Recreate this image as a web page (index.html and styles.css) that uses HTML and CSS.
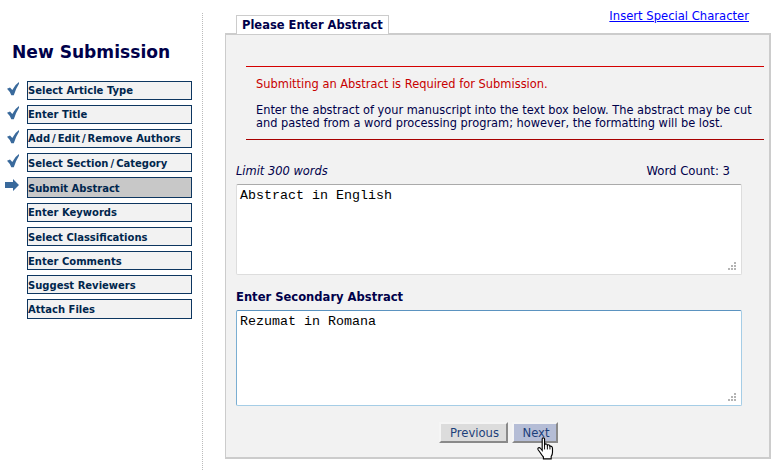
FILE: index.html
```html
<!DOCTYPE html>
<html lang="en">
<head>
    <meta charset="UTF-8">
    <title>New Submission</title>
    <link rel="stylesheet" href="styles.css">
</head>
<body>
    <div class="page">
        <div class="sidebar">
            <h1 class="title">New Submission</h1>
            <ul class="steps">
                <li class="step">
                    <svg class="mark" viewBox="0 0 16 16"><path d="M4 7.8 L7 6.5 L9.3 9 Q12 3.5 16 1 L16.5 2 Q13 7 10.8 14.3 H8.3 Q7 10.5 4 7.8 Z" fill="#3a6a9c"/></svg>
                    <a class="step-link">Select Article Type</a>
                </li>
                <li class="step">
                    <svg class="mark" viewBox="0 0 16 16"><path d="M4 7.8 L7 6.5 L9.3 9 Q12 3.5 16 1 L16.5 2 Q13 7 10.8 14.3 H8.3 Q7 10.5 4 7.8 Z" fill="#3a6a9c"/></svg>
                    <a class="step-link">Enter Title</a>
                </li>
                <li class="step">
                    <svg class="mark" viewBox="0 0 16 16"><path d="M4 7.8 L7 6.5 L9.3 9 Q12 3.5 16 1 L16.5 2 Q13 7 10.8 14.3 H8.3 Q7 10.5 4 7.8 Z" fill="#3a6a9c"/></svg>
                    <a class="step-link">Add<span class="slash">/</span>Edit<span class="slash">/</span>Remove Authors</a>
                </li>
                <li class="step">
                    <svg class="mark" viewBox="0 0 16 16"><path d="M4 7.8 L7 6.5 L9.3 9 Q12 3.5 16 1 L16.5 2 Q13 7 10.8 14.3 H8.3 Q7 10.5 4 7.8 Z" fill="#3a6a9c"/></svg>
                    <a class="step-link step-link-low">Select Section<span class="slash">/</span>Category</a>
                </li>
                <li class="step step-current">
                    <svg class="mark" viewBox="0 0 16 16"><path d="M2 5 H10 V2 L16 8 L10 14 V11 H2 Z" fill="#3a6a9c"/></svg>
                    <a class="step-link step-link-low">Submit Abstract</a>
                </li>
                <li class="step"><span class="mark"></span><a class="step-link">Enter Keywords</a></li>
                <li class="step"><span class="mark"></span><a class="step-link step-link-low">Select Classifications</a></li>
                <li class="step"><span class="mark"></span><a class="step-link step-link-low">Enter Comments</a></li>
                <li class="step"><span class="mark"></span><a class="step-link step-link-low">Suggest Reviewers</a></li>
                <li class="step"><span class="mark"></span><a class="step-link step-link-low">Attach Files</a></li>
            </ul>
        </div>
        <div class="main">
            <div class="tab-row">
                <div class="tab">Please Enter Abstract</div>
                <a class="special-link" href="#">Insert Special Character</a>
            </div>
            <div class="panel">
                <div class="notice">
                    <p class="required">Submitting an Abstract is Required for Submission.</p>
                    <p class="help">Enter the abstract of your manuscript into the text box below. The abstract may be cut and pasted from a word processing program; however, the formatting will be lost.</p>
                </div>
                <div class="limit-row">
                    <em>Limit 300 words</em>
                    <span class="word-count">Word Count: 3</span>
                </div>
                <div class="abstract-wrap abstract-wrap-first">
                    <textarea class="abstract abstract-first">Abstract in English</textarea>
                    <svg class="grip" viewBox="0 0 8 8"><path d="M6 0 h2 v2 h-2 Z M3 3 h2 v2 h-2 Z M6 3 h2 v2 h-2 Z M0 6 h2 v2 h-2 Z M3 6 h2 v2 h-2 Z M6 6 h2 v2 h-2 Z" fill="#b4b4b4"/></svg>
                </div>
                <label class="secondary-label">Enter Secondary Abstract</label>
                <div class="abstract-wrap">
                    <textarea class="abstract abstract-second">Rezumat in Romana</textarea>
                    <svg class="grip" viewBox="0 0 8 8"><path d="M6 0 h2 v2 h-2 Z M3 3 h2 v2 h-2 Z M6 3 h2 v2 h-2 Z M0 6 h2 v2 h-2 Z M3 6 h2 v2 h-2 Z M6 6 h2 v2 h-2 Z" fill="#b4b4b4"/></svg>
                </div>
                <div class="buttons">
                    <button class="btn btn-previous">Previous</button>
                    <div class="next-wrap">
                        <button class="btn btn-next">Next</button>
                        <svg class="hand" viewBox="0 0 18 24">
                            <path d="M5.5 2 Q5.5 0.7 6.8 0.7 Q8 0.7 8 2 V8 Q8.6 7 9.8 7.2 Q10.9 7.4 11 8.6 Q11.7 7.8 12.8 8.2 Q13.7 8.6 13.7 9.6 Q14.5 9.2 15.5 9.8 Q16.4 10.4 16.4 12 V16 Q16.4 18.5 15 20.5 V23 H6.8 V21 Q5 19 3.5 16.5 L1.2 13.4 Q0.5 12 1.6 11.3 Q2.8 10.7 3.8 12 L5.5 14 Z" fill="#fff" stroke="#000" stroke-width="1.2"/>
                            <path d="M8 8 V13 M11 8.6 V13 M13.7 9.6 V13" fill="none" stroke="#000" stroke-width="1"/>
                        </svg>
                    </div>
                </div>
            </div>
        </div>
    </div>
</body>
</html>
```

FILE: styles.css
```css
html, body {
    margin: 0;
    background-color: #fff;
}
body {
    font-family: "DejaVu Sans", Verdana, sans-serif;
    font-size: 11.45px;
    color: #00004a;
}
.page {
    display: flex;
    align-items: flex-start;
    height: 474px;
    overflow: hidden;
}
.sidebar {
    box-sizing: border-box;
    width: 203px;
    height: 457px;
    margin-top: 13px;
    padding: 30px 0 0 3px;
    border-right: 1px dotted #bbb;
}
.title {
    margin: 0 0 0 9px;
    font-size: 17.1px;
    line-height: 19px;
    color: #00004a;
}
.steps {
    list-style: none;
    margin: 19px 0 0;
    padding: 0;
}
.step {
    display: flex;
    align-items: flex-start;
    margin-bottom: 5px;
}
.mark {
    display: block;
    flex: none;
    width: 16px;
    height: 16px;
    margin: 0 8px 0 0;
}
.step-link {
    box-sizing: border-box;
    display: block;
    width: 165px;
    height: 19px;
    border: 1px solid #0d3660;
    background-color: #f2f2f2;
    font-size: 10px;
    font-weight: bold;
    line-height: 18px;
    color: #00264d;
    white-space: nowrap;
}
.step-link-low {
    line-height: 20px;
}
.slash {
    padding: 0 2px;
}
.step-current .step-link {
    height: 21px;
    background-color: #c8c8c8;
    line-height: 22px;
}
.step:last-child .step-link {
    height: 20px;
}
.main {
    width: 546px;
    margin: 0 0 0 22px;
}
.tab-row {
    display: flex;
    justify-content: space-between;
    align-items: flex-end;
    height: 34px;
    margin-bottom: -1px;
    position: relative;
}
.tab {
    box-sizing: border-box;
    height: 19px;
    margin-left: 11px;
    padding: 0 5px;
    border: 1px solid #ccc;
    border-bottom: 0;
    background-color: #fff;
    font-weight: bold;
    font-size: 11.5px;
    line-height: 18px;
    color: #00004a;
}
.special-link {
    align-self: flex-start;
    margin: 9px 22px 0 0;
    font-size: 11.6px;
    line-height: 15px;
    color: #00f;
}
.panel {
    box-sizing: border-box;
    height: 426px;
    padding: 31px 0 0 10px;
    border: 1px solid #ccc;
    border-width: 2px 2px 2px 1px;
    background-color: #f2f2f2;
}
.notice {
    margin: 0 5px 0 10px;
    height: 74px;
    padding: 11px 0 0 10px;
    border-top: 1px solid #d40000;
    border-bottom: 1px solid #a80000;
    box-sizing: border-box;
    line-height: 13px;
}
.notice p {
    margin: 0;
}
.required {
    color: #c80000;
}
.notice .help {
    margin-top: 13px;
    font-size: 11.39px;
}
.limit-row {
    display: flex;
    justify-content: space-between;
    width: 494px;
    margin-top: 24px;
    line-height: 14px;
}
.word-count {
    font-size: 11.7px;
}
.abstract-wrap {
    position: relative;
    width: 506px;
}
.abstract-wrap-first {
    margin-top: 6px;
}
.abstract {
    box-sizing: border-box;
    display: block;
    width: 506px;
    padding: 3px 3px;
    border: 1px solid #ddd;
    border-top-color: #aaa;
    border-radius: 2px;
    background-color: #fff;
    font-family: "Liberation Mono", "Courier New", monospace;
    font-size: 13.33px;
    color: #000;
    margin: 0;
    outline: 0;
    resize: none;
}
.abstract-first {
    height: 91px;
}
.abstract-second {
    height: 96px;
    border-color: #a5cde6;
    border-top-color: #5b93c0;
    border-left-color: #7aaed2;
}
.grip {
    position: absolute;
    right: 6px;
    bottom: 5px;
    width: 8px;
    height: 8px;
}
.secondary-label {
    display: block;
    margin: 15px 0 6px;
    font-size: 11.55px;
    font-weight: bold;
    line-height: 14px;
}
.buttons {
    display: flex;
    gap: 4px;
    margin: 16px 0 0 203px;
}
.btn {
    box-sizing: border-box;
    height: 21px;
    padding: 1px 0 0 2px;
    border: 2px solid;
    border-color: #f5f5f5 #8a8a8a #8a8a8a #f5f5f5;
    background-color: #dcdcdc;
    font-family: "DejaVu Sans", Verdana, sans-serif;
    font-size: 11.6px;
    color: #1c3f7a;
}
.btn-previous {
    width: 69px;
}
.btn-next {
    display: block;
    width: 46px;
    background-color: #b5bdd6;
}
.next-wrap {
    position: relative;
}
.hand {
    position: absolute;
    left: 25px;
    top: 15px;
    width: 17px;
    height: 23px;
}
```
